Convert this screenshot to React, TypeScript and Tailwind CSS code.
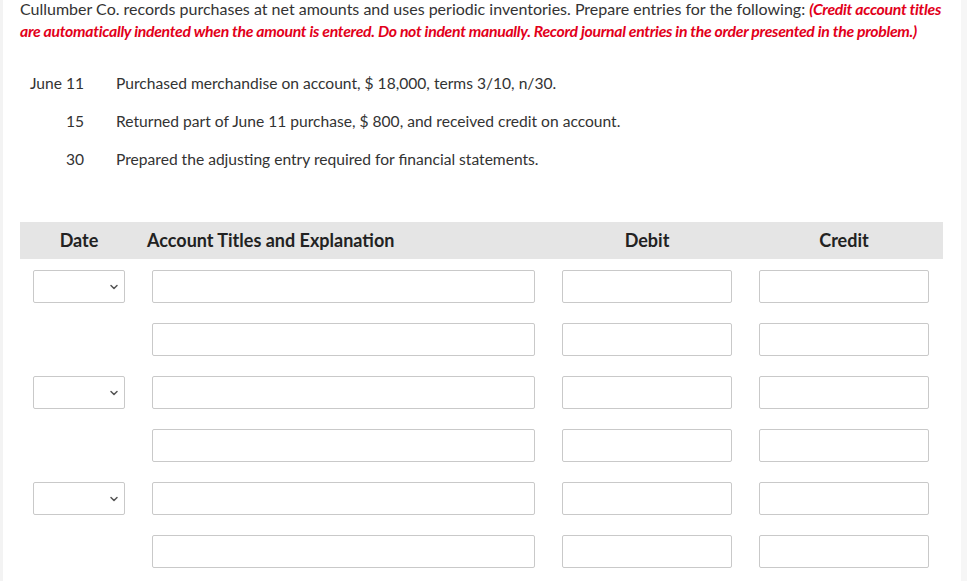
import { ChevronDown } from "lucide-react";

const items = [
  { date: "June 11", text: "Purchased merchandise on account, $ 18,000, terms 3/10, n/30." },
  { date: "15", text: "Returned part of June 11 purchase, $ 800, and received credit on account." },
  { date: "30", text: "Prepared the adjusting entry required for financial statements." },
];

const rows = [true, false, true, false, true, false];

const box = "h-[33px] border border-[#c9c9c9] rounded-[2px] bg-white";

export default function App() {
  return (
    <div
      className="w-[967px] h-[581px] bg-white text-[#333] overflow-hidden relative"
      style={{ fontFamily: "Lato, 'Open Sans', sans-serif" }}
    >
      <div className="absolute left-0 top-0 bottom-0 w-[3px] bg-[#f3f3f3]" />
      <div className="absolute right-0 top-0 bottom-0 w-[6px] bg-[#f6f6f6]" />

      <p className="pl-[20px] pr-[22px] -mt-[2px] text-[16px] leading-[22px]">
        Cullumber Co. records purchases at net amounts and uses periodic inventories. Prepare entries for the following:{" "}
        <span className="text-[#e2001a] font-bold italic text-[15.8px] tracking-[-0.3px]">
          (Credit account titles are automatically indented when the amount is entered. Do not indent manually. Record journal entries in the order presented in the problem.)
        </span>
      </p>

      <div className="mt-[30px] flex flex-col gap-[16px] text-[15.6px] leading-[22px]">
        {items.map((it) => (
          <div key={it.date} className="flex">
            <div className="w-[84px] text-right">{it.date}</div>
            <div className="ml-[32px]">{it.text}</div>
          </div>
        ))}
      </div>

      <div className="mt-[52px] mx-[20px] w-[923px]">
        <div className="h-[37px] bg-[#e5e5e5] flex items-center pl-[13px] font-bold text-[18px] text-[#222]">
          <div className="w-[92px] text-center">Date</div>
          <div className="w-[383px] ml-[22px]">Account Titles and Explanation</div>
          <div className="w-[170px] ml-[32px] text-center">Debit</div>
          <div className="w-[170px] ml-[27px] text-center">Credit</div>
        </div>

        <div className="pt-[11px] flex flex-col gap-[20px]">
          {rows.map((hasDate, i) => (
            <div key={i} className="flex pl-[13px] gap-[27px]">
              {hasDate ? (
                <div className={`${box} w-[92px] flex items-center justify-end pr-[4px]`}>
                  <ChevronDown size={12} strokeWidth={3} className="text-[#555]" />
                </div>
              ) : (
                <div className="w-[92px]" />
              )}
              <div className={`${box} w-[383px]`} />
              <div className={`${box} w-[170px]`} />
              <div className={`${box} w-[170px]`} />
            </div>
          ))}
        </div>
      </div>
    </div>
  );
}
